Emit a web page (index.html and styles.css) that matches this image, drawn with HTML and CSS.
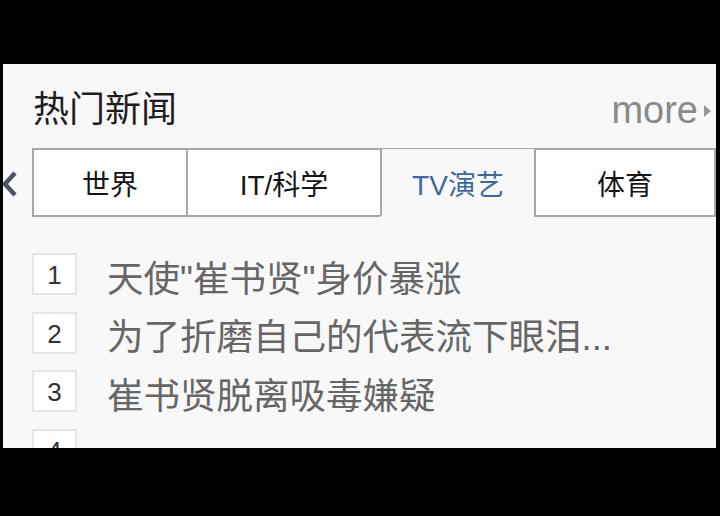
FILE: index.html
```html
<!DOCTYPE html>
<html lang="zh-CN">
<head>
  <meta charset="UTF-8">
  <meta name="viewport" content="width=device-width, initial-scale=1.0">
  <title>热门新闻</title>
  <link rel="stylesheet" href="styles.css">
</head>
<body>
  <div class="panel">
    <!-- Header -->
    <div class="panel-head">
      <h2 class="panel-title">热门新闻</h2>
      <a class="more" href="#">more<span class="more-arrow"></span></a>
    </div>

    <!-- Category tabs -->
    <div class="tab-row">
      <span class="tab-prev">
        <svg width="16" height="26" viewBox="0 0 16 26"><path d="M13 2 L3 13 L13 24" fill="none" stroke="#4a5565" stroke-width="4.5"/></svg>
      </span>
      <div class="tabs">
        <div class="tab tab-w1">世界</div>
        <div class="tab tab-w2">IT/科学</div>
        <div class="tab tab-w1 active">TV演艺</div>
        <div class="tab tab-w3">体育</div>
      </div>
    </div>

    <!-- Ranked list -->
    <ol class="rank-list">
      <li><span class="rank">1</span><span class="headline">天使"崔书贤"身价暴涨</span></li>
      <li><span class="rank">2</span><span class="headline">为了折磨自己的代表流下眼泪...</span></li>
      <li><span class="rank">3</span><span class="headline">崔书贤脱离吸毒嫌疑</span></li>
      <li><span class="rank">4</span><span class="headline"></span></li>
    </ol>
  </div>
</body>
</html>
```

FILE: styles.css
```css
* {
  margin: 0;
  padding: 0;
  box-sizing: border-box;
}

body {
  background: #000;
  font-family: "Liberation Sans", "Noto Sans CJK SC", sans-serif;
}

/* Main panel */
.panel {
  margin: 64px 0 0 3px;
  width: 713px;
  height: 384px;
  background: #f8f8f8;
  overflow: hidden;
}

.panel-head {
  height: 84px;
  padding: 8px 5px 0 30px;
  display: flex;
  justify-content: space-between;
  align-items: center;
}

.panel-title {
  font-size: 36px;
  font-weight: normal;
  line-height: 1;
  color: #1e1e1e;
}

.more {
  display: flex;
  align-items: center;
  gap: 6px;
  font-size: 38px;
  line-height: 1;
  color: #8a8a8a;
  text-decoration: none;
}

.more-arrow {
  width: 0;
  height: 0;
  border-top: 6px solid transparent;
  border-bottom: 6px solid transparent;
  border-left: 7px solid #999;
  margin-top: 2px;
}

/* Tabs */
.tab-row {
  display: flex;
  height: 69px;
}

.tab-prev {
  width: 30px;
  display: flex;
  align-items: center;
  margin-left: -1px;
  padding-top: 2px;
}

.tabs {
  display: flex;
  margin-left: 1px;
}

.tab {
  height: 69px;
  display: flex;
  align-items: center;
  justify-content: center;
  background: #fff;
  border: 2px solid #a8a8a8;
  margin-left: -2px;
  font-size: 28px;
  color: #151515;
}

.tab:first-child {
  margin-left: 0;
}

.tab-w1 { width: 156px; }
.tab-w2 { width: 196px; }
.tab-w3 { width: 182px; }

.tab.active {
  background: #f8f8f8;
  border-bottom-color: transparent;
  border-top-width: 1px;
  padding-top: 1px;
  color: #3d68a3;
}

/* Ranked list */
.rank-list {
  list-style: none;
  padding: 28px 0 0 29px;
}

.rank-list li {
  height: 58.5px;
  display: flex;
  align-items: center;
}

.rank {
  width: 45px;
  height: 42px;
  flex-shrink: 0;
  display: flex;
  align-items: center;
  justify-content: center;
  padding-top: 3px;
  background: #fff;
  border: 2px solid #e6e6e6;
  font-size: 26px;
  color: #333;
}

.headline {
  margin-left: 30px;
  padding-top: 4px;
  font-size: 36.5px;
  color: #666;
  white-space: nowrap;
}
```
